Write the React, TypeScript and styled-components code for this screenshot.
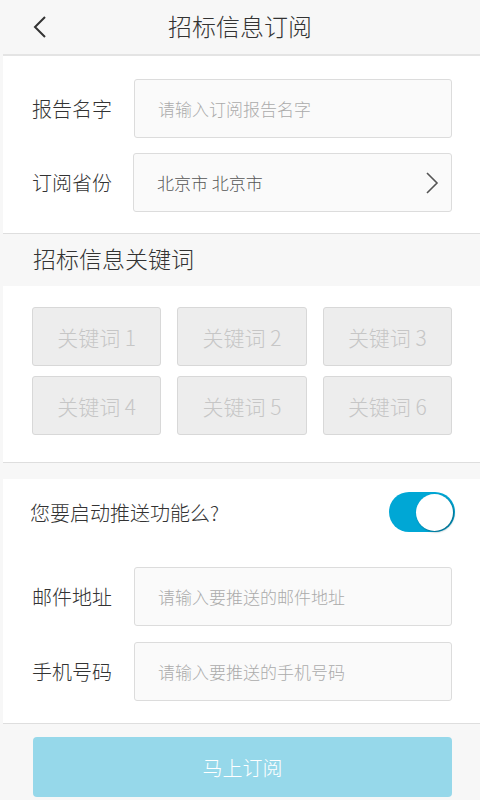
import styled, { createGlobalStyle } from 'styled-components'

const GlobalStyle = createGlobalStyle`
	html, body {
		margin: 0;
		padding: 0;
		background: #f7f7f7;
	}
	body {
		font-family: 'Noto Sans CJK SC', 'Noto Sans', sans-serif;
		font-weight: 300;
		color: #333;
	}
	* {
		box-sizing: border-box;
	}
`

const Page = styled.div`
	width: 480px;
	height: 800px;
	background: #f7f7f7;
	overflow: hidden;
`

const Header = styled.div`
	height: 56px;
	display: flex;
	align-items: center;
	justify-content: center;
	position: relative;
	border-bottom: 2px solid #e4e4e4;
	margin-left: 3px;
	padding-bottom: 4px;
`

const BackButton = styled.div`
	position: absolute;
	left: 26px;
	top: 15px;
	width: 20px;
	height: 24px;
`

const Title = styled.div`
	font-size: 24px;
	color: #333;
	margin-left: -3px;
`

const Card = styled.div<{ top?: number; bottom?: number }>`
	margin-left: 3px;
	background: #fff;
	padding: ${p => p.top ?? 0}px 28px ${p => p.bottom ?? 0}px 29px;
	border-bottom: 1px solid #dedede;
`

const FormRow = styled.div<{ gap?: number }>`
	display: flex;
	align-items: center;
	margin-top: ${p => p.gap ?? 0}px;
`

const Label = styled.div`
	width: 102px;
	font-size: 20px;
	color: #333;
	padding-left: 0;
`

const Field = styled.div<{ filled?: boolean }>`
	flex: 1;
	height: 59px;
	display: flex;
	align-items: center;
	justify-content: space-between;
	padding: 0 12px 0 23px;
	background: #fafafa;
	border: 1px solid #dcdcdc;
	border-radius: 3px;
	font-size: 17px;
	color: ${p => (p.filled ? '#555' : '#ababab')};
`

const SectionTitle = styled.div`
	height: 52px;
	display: flex;
	align-items: center;
	padding-left: 33px;
	padding-bottom: 4px;
	font-size: 23px;
	color: #333;
`

const KeywordGrid = styled.div`
	display: grid;
	grid-template-columns: repeat(3, 1fr);
	column-gap: 16px;
	row-gap: 10px;
`

const Keyword = styled.div`
	height: 59px;
	display: flex;
	align-items: center;
	justify-content: center;
	background: #ededed;
	border: 1px solid #d8d8d8;
	border-radius: 3px;
	font-size: 21px;
	color: #c6c6c6;
`

const Spacer = styled.div<{ h: number }>`
	height: ${p => p.h}px;
`

const ToggleRow = styled.div`
	display: flex;
	align-items: center;
	justify-content: space-between;
	margin-left: -2px;
`

const ToggleText = styled.div`
	font-size: 20px;
	color: #333;
`

const Track = styled.div`
	width: 66px;
	height: 40px;
	border-radius: 20px;
	background: #00a7d5;
	position: relative;
	margin-right: -3px;
`

const Knob = styled.div`
	position: absolute;
	right: 2px;
	top: 1.5px;
	width: 37px;
	height: 37px;
	border-radius: 50%;
	background: #fff;
	box-shadow: 1px 1px 2px rgba(0, 60, 80, 0.6);
`

const Footer = styled.div`
	padding: 13px 28px 0 33px;
`

const SubmitButton = styled.div`
	height: 60px;
	display: flex;
	align-items: center;
	justify-content: center;
	background: #96d8ea;
	border-radius: 4px;
	font-size: 20px;
	color: #fff;
`

const keywords = ['关键词 1', '关键词 2', '关键词 3', '关键词 4', '关键词 5', '关键词 6']

export default function App() {
	return (
		<Page>
			<GlobalStyle />
			<Header>
				<BackButton>
					<svg width="20" height="24" viewBox="0 0 20 24">
						<polyline
							points="16,2 6,12 16,22"
							fill="none"
							stroke="#333"
							strokeWidth="2"
						/>
					</svg>
				</BackButton>
				<Title>招标信息订阅</Title>
			</Header>
			<Card top={23} bottom={21}>
				<FormRow>
					<Label>报告名字</Label>
					<Field>请输入订阅报告名字</Field>
				</FormRow>
				<FormRow gap={15}>
					<Label>订阅省份</Label>
					<Field filled style={{ marginLeft: -1 }}>
						北京市 北京市
						<svg width="14" height="22" viewBox="0 0 14 22">
							<polyline
								points="2,1 12,11 2,21"
								fill="none"
								stroke="#555"
								strokeWidth="1.6"
							/>
						</svg>
					</Field>
				</FormRow>
			</Card>
			<SectionTitle>招标信息关键词</SectionTitle>
			<Card top={21} bottom={27}>
				<KeywordGrid>
					{keywords.map(k => (
						<Keyword key={k}>{k}</Keyword>
					))}
				</KeywordGrid>
			</Card>
			<Spacer h={16} />
			<Card top={13} bottom={22}>
				<ToggleRow>
					<ToggleText>您要启动推送功能么?</ToggleText>
					<Track>
						<Knob />
					</Track>
				</ToggleRow>
				<FormRow gap={35}>
					<Label>邮件地址</Label>
					<Field>请输入要推送的邮件地址</Field>
				</FormRow>
				<FormRow gap={16}>
					<Label>手机号码</Label>
					<Field>请输入要推送的手机号码</Field>
				</FormRow>
			</Card>
			<Footer>
				<SubmitButton>马上订阅</SubmitButton>
			</Footer>
		</Page>
	)
}
